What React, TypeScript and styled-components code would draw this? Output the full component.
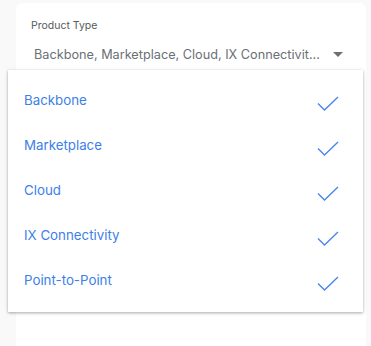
import React from 'react';
import styled, { createGlobalStyle } from 'styled-components';

const options = ['Backbone', 'Marketplace', 'Cloud', 'IX Connectivity', 'Point-to-Point'];

const GlobalStyle = createGlobalStyle`
  html, body {
    margin: 0;
    background: #f9f9f9;
    font-family: Inter, "Noto Sans", sans-serif;
  }
`;

const Check: React.FC = () => (
  <svg width="22" height="16" viewBox="0 0 22 16" fill="none">
    <path d="M1 7.5 L7.5 14 L21 1" stroke="#4a86ee" strokeWidth="1.4" />
  </svg>
);

const App: React.FC = () => {
  return (
    <StyledPage>
      <GlobalStyle />
      <Card>
        <Field>
          <div className="label">Product Type</div>
          <div className="select">
            <span className="value">Backbone, Marketplace, Cloud, IX Connectivit...</span>
            <span className="arrow" />
          </div>
        </Field>
      </Card>
      <Menu>
        {options.map((o) => (
          <MenuItem key={o}>
            <span>{o}</span>
            <Check />
          </MenuItem>
        ))}
      </Menu>
    </StyledPage>
  );
};

export default App;

const StyledPage = styled.div`
  position: relative;
  width: 371px;
  height: 346px;
  overflow: hidden;
`;

const Card = styled.div`
  margin: 3px 0 0 16px;
  width: 350px;
  height: 360px;
  background: #fff;
  border-radius: 6px;
`;

const Field = styled.div`
  padding: 16px 13px 0 13px;

  .label {
    padding-left: 2px;
    font-size: 10.5px;
    color: #555a60;
    line-height: 14px;
  }

  .select {
    margin-top: 8px;
    display: flex;
    align-items: center;
    justify-content: space-between;
    height: 26px;
    border-bottom: 1px solid #d4d4d4;
    padding: 0 10px 4px 5px;
  }

  .value {
    font-size: 12.7px;
    white-space: nowrap;
    color: #6b6f76;
  }

  .arrow {
    width: 0;
    height: 0;
    border-left: 5px solid transparent;
    border-right: 5px solid transparent;
    border-top: 5px solid #6b7077;
  }
`;

const Menu = styled.div`
  position: absolute;
  left: 8px;
  top: 70px;
  width: 355px;
  height: 242px;
  background: #fff;
  box-shadow: 0 1px 3px rgba(0, 0, 0, 0.35);
  padding-top: 8px;
  box-sizing: border-box;
`;

const MenuItem = styled.div`
  display: flex;
  justify-content: space-between;
  align-items: center;
  height: 45px;
  padding: 0 24px 0 16px;
  color: #3d7fe8;
  font-size: 13.3px;

  span {
    margin-top: -1px;
  }

  svg {
    margin-top: 7px;
  }
`;
